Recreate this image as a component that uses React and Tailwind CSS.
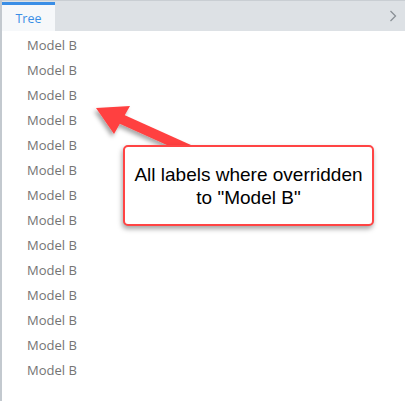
import React from "react";

export default function App() {
  const rows = Array.from({ length: 14 });
  return (
    <div className="relative w-[405px] h-[401px] bg-white overflow-hidden">
      <div className="flex flex-col h-full border-l-2 border-[#c3c9cf]">
        <div className="flex h-[31px] bg-[#dde1e5] border-t border-[#c9ced3] items-stretch">
          <div className="w-[53px] bg-[#f6f8fa] border-t-[3px] border-[#3a8ee6] mt-[1px] flex items-center justify-center">
            <span className="text-[12.5px] text-[#3a8ee6] mt-[2px]" style={{ fontFamily: '"Open Sans", sans-serif' }}>Tree</span>
          </div>
          <div className="flex-1" />
          <div className="w-[24px] flex items-center justify-center">
            <svg width="8" height="12" viewBox="0 0 8 12">
              <path d="M1.5 1 L6.5 6 L1.5 11" fill="none" stroke="#8a9096" strokeWidth="1.3" />
            </svg>
          </div>
        </div>
        <div className="flex flex-col pt-[2px] pl-[25px]">
          {rows.map((_, i) => (
            <div key={i} className="h-[25px] flex items-center text-[13px] text-[#747474]" style={{ fontFamily: '"Open Sans", sans-serif' }}>
              Model B
            </div>
          ))}
        </div>
      </div>

      <svg className="absolute left-0 top-0" width="405" height="401" style={{ pointerEvents: "none" }}>
        <defs>
          <filter id="sh" x="-20%" y="-20%" width="140%" height="140%">
            <feDropShadow dx="-2" dy="3" stdDeviation="2" floodColor="#000" floodOpacity="0.35" />
          </filter>
        </defs>
        <g filter="url(#sh)">
          <line x1="119" y1="118" x2="190" y2="150" stroke="#ff4141" strokeWidth="10" />
          <polygon points="96,108 130,106 114,134" fill="#ff4141" />
        </g>
      </svg>

      <div
        className="absolute left-[123px] top-[145px] w-[251px] h-[81px] bg-white border-2 border-[#ff4444] rounded-[5px] shadow-[-1px_3px_5px_rgba(0,0,0,0.35)] flex items-center justify-center text-center text-[19px] leading-[23px] text-black"
        style={{ fontFamily: '"Liberation Sans", Arial, sans-serif' }}
      >
        <span className="mt-[1px]">
          All labels where overridden
          <br />
          to "Model B"
        </span>
      </div>
    </div>
  );
}
